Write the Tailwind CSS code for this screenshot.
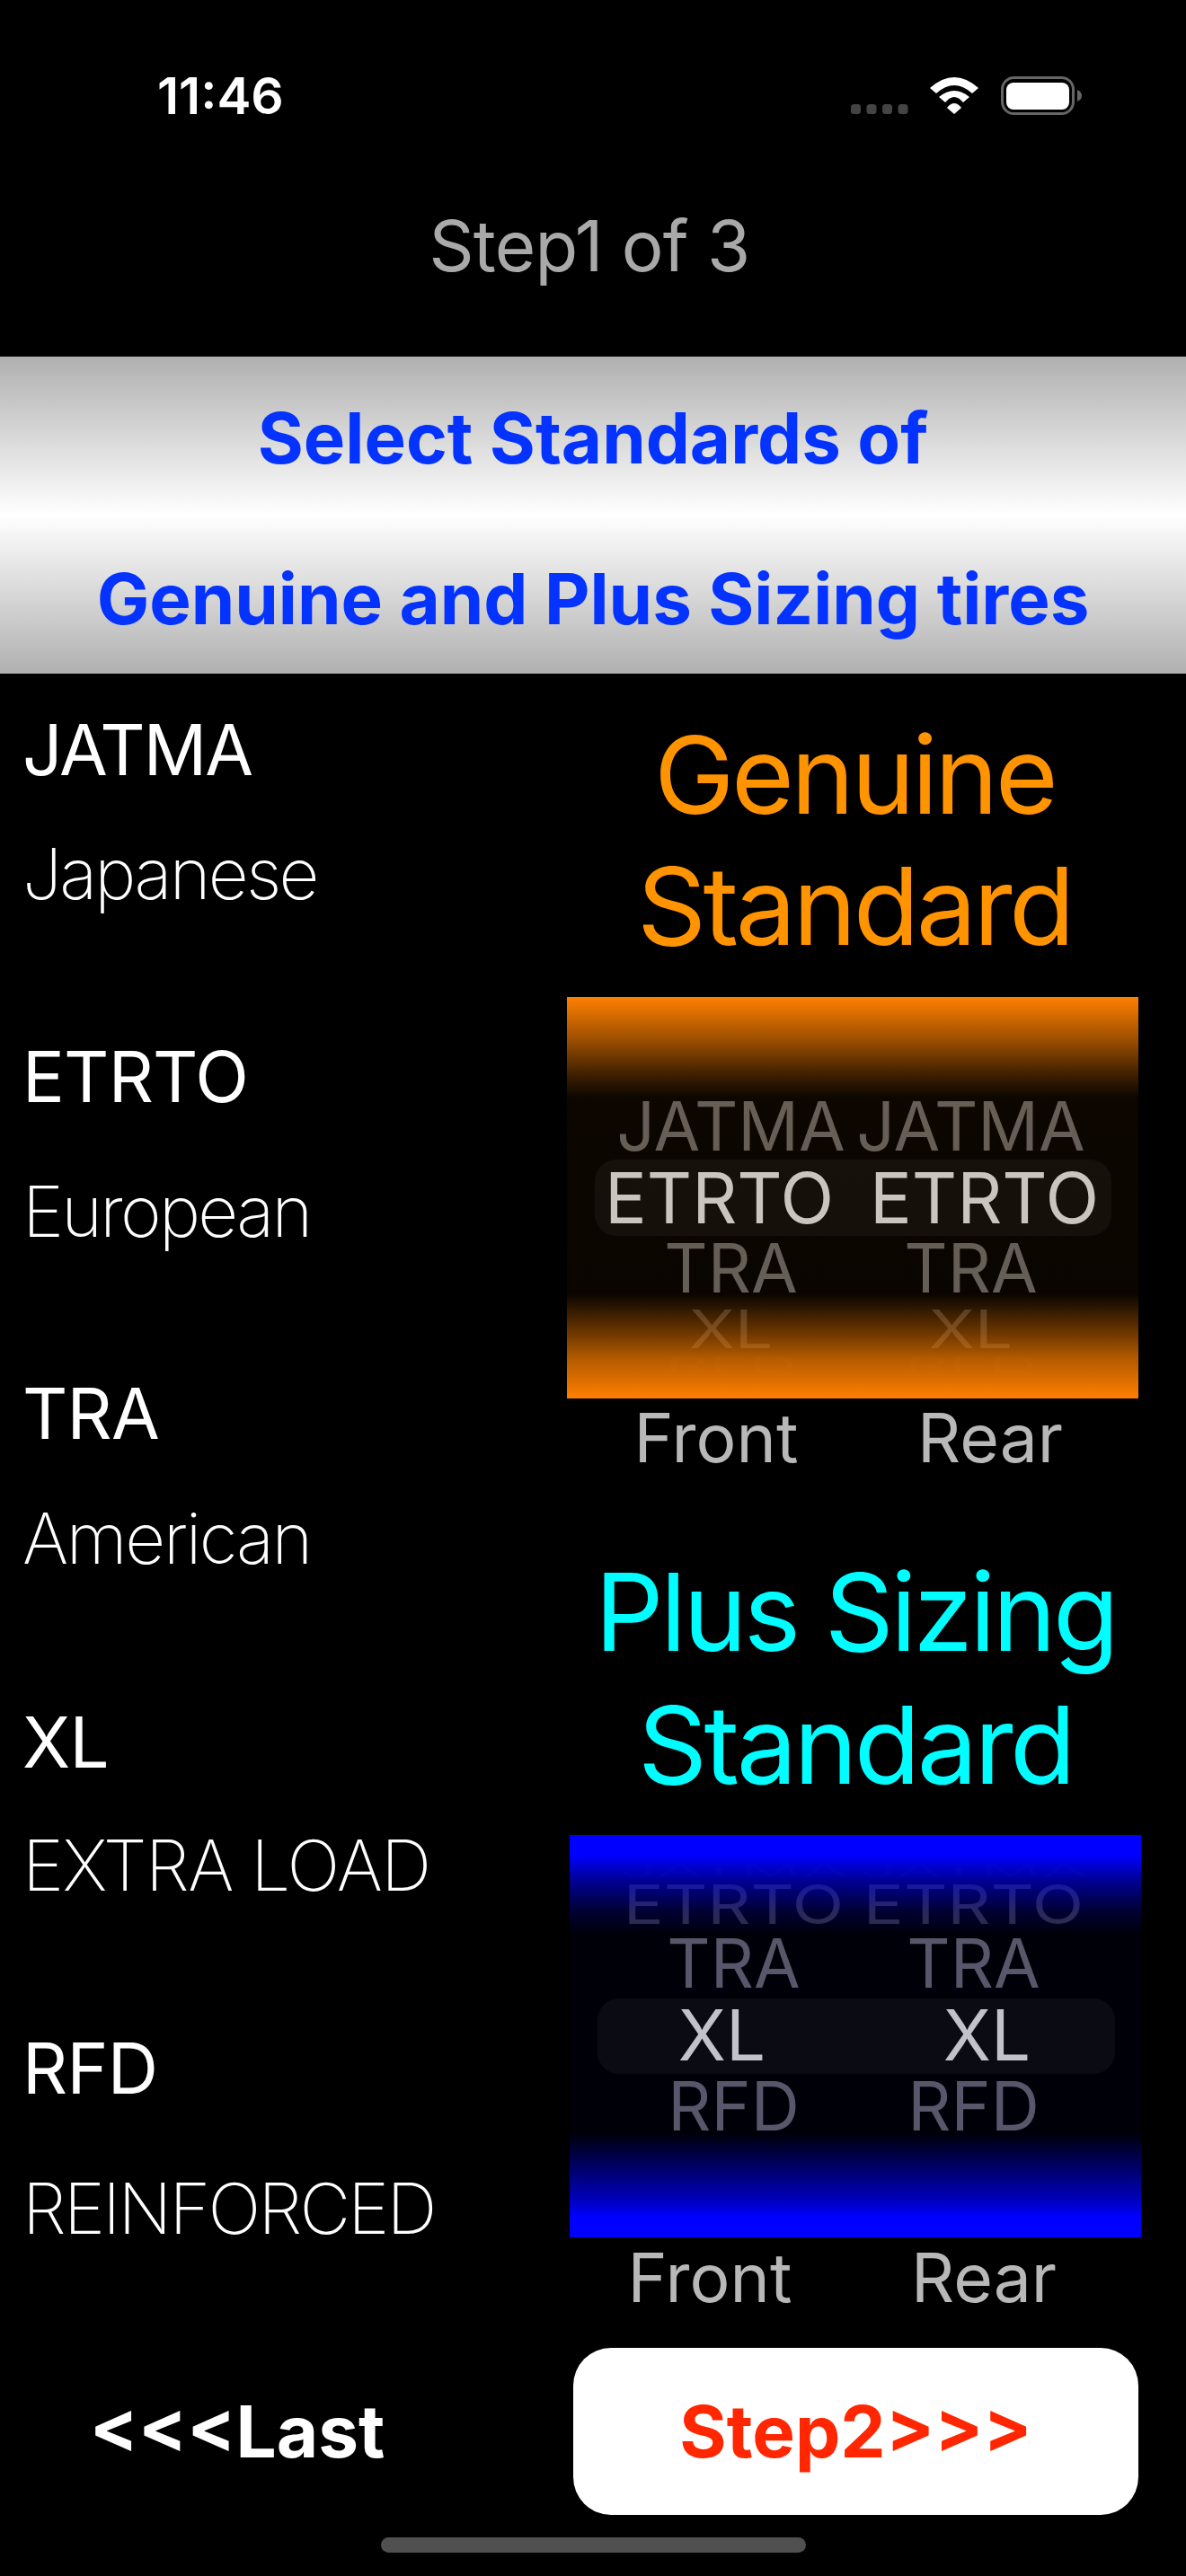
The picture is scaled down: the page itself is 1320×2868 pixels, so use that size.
<!DOCTYPE html>
<html lang="en">
<head>
    <meta charset="UTF-8">
    <meta name="viewport" content="width=device-width, initial-scale=1.0">
    <title>Step1 of 3</title>
    <script src="https://cdn.jsdelivr.net/npm/@tailwindcss/browser@4"></script>
</head>
<body class="bg-black font-['Inter',sans-serif]">
    <div class="w-[1320px] h-[2868px] bg-black overflow-hidden flex flex-col">
        <!-- Status bar -->
        <div class="h-[212px] shrink-0 flex items-center justify-between pl-[175px] pr-[116px]">
            <span class="text-[57px] font-semibold text-white leading-none">11:46</span>
            <svg width="257" height="43" viewBox="947 85 257 43">
                <rect x="947" y="116" width="11" height="11" rx="3.5" fill="#444"/>
                <rect x="964.5" y="116" width="11" height="11" rx="3.5" fill="#444"/>
                <rect x="982" y="116" width="11" height="11" rx="3.5" fill="#444"/>
                <rect x="999.5" y="116" width="11" height="11" rx="3.5" fill="#444"/>
                <path d="M1035 98 Q1062 74 1089 98 L1082 104 Q1062 86 1042 104 Z" fill="#fff"/>
                <path d="M1045 108 Q1062 94 1079 108 L1072 114 Q1062 102 1052 114 Z" fill="#fff"/>
                <path d="M1054 120 Q1062 110 1070 120 L1062 127 Z" fill="#fff"/>
                <rect x="1115.5" y="86.5" width="79" height="40" rx="13" fill="none" stroke="#666" stroke-width="3"/>
                <rect x="1120" y="92" width="70" height="30" rx="8" fill="#fff"/>
                <path d="M1199 100 Q1204 102 1204 106.500 Q1204 111 1199 113 Z" fill="#666"/>
            </svg>
        </div>

        <!-- Title -->
        <div class="h-[124px] mb-[61px] shrink-0 flex items-center justify-center pr-[8px]">
            <h1 class="text-[78px] font-normal tracking-[-0.01em] text-[#a9a9a9] leading-none">Step1 of 3</h1>
        </div>

        <!-- Banner -->
        <div class="h-[353px] shrink-0 bg-[linear-gradient(to_bottom,#b0b0b0,#ffffff_50%,#b0b0b0)] flex flex-col items-center pt-[41px] text-[78px] font-bold text-[#0433ff] leading-[100px]">
            <p>Select Standards of</p>
            <p class="mt-[79px]">Genuine and Plus Sizing tires</p>
        </div>

        <!-- Main -->
        <div class="h-[1864px] shrink-0 flex">
            <!-- Legend -->
            <div class="w-[631px] shrink-0 pl-[25px] pt-[35px] text-[78px] text-white leading-[100px]">
                <p class="tracking-[-0.025em]">JATMA</p>
                <p class="mt-[38px] font-extralight tracking-[-0.035em]">Japanese</p>
                <p class="mt-[126px] tracking-[-0.01em]">ETRTO</p>
                <p class="mt-[50px] font-extralight tracking-[-0.035em]">European</p>
                <p class="mt-[125px] tracking-[-0.01em]">TRA</p>
                <p class="mt-[39px] font-extralight tracking-[-0.03em]">American</p>
                <p class="mt-[127px] tracking-[-0.01em]">XL</p>
                <p class="mt-[37px] font-extralight tracking-[-0.02em]">EXTRA LOAD</p>
                <p class="mt-[126px] tracking-[-0.01em]">RFD</p>
                <p class="mt-[56px] font-extralight tracking-[-0.035em]">REINFORCED</p>
            </div>

            <!-- Pickers -->
            <div class="w-[640px] shrink-0">
                <div class="pt-[40px] pl-[4px] w-[636px] text-center text-[120px] tracking-[-0.03em] text-[#ff9300] leading-[146px]">
                    <p>Genuine</p>
                    <p>Standard</p>
                </div>

                <!-- Genuine picker -->
                <div class="relative w-[636px] h-[447px] mt-[28px] pt-[104px] bg-black overflow-hidden text-center text-[75px] text-[#5f5d5a]">
                    <div class="absolute left-[31px] top-[181px] w-[575px] h-[85px] rounded-[24px] bg-white/[0.045]"></div>
                    <div class="relative h-[80px] leading-[80px] pl-[49px] pr-[53px] grid grid-cols-2"><span>JATMA</span><span>JATMA</span></div>
                    <div class="relative h-[80px] leading-[80px] pl-[22px] pr-[24px] grid grid-cols-2 text-[78px] text-[#c8c8c8]"><span>ETRTO</span><span>ETRTO</span></div>
                    <div class="relative h-[76px] leading-[76px] pl-[49px] pr-[53px] grid grid-cols-2"><span>TRA</span><span>TRA</span></div>
                    <div class="relative h-[60px] leading-[60px] pl-[49px] pr-[53px] grid grid-cols-2 scale-y-[0.78] text-[#5f5d5a]/50"><span>XL</span><span>XL</span></div>
                    <div class="relative h-[20px] leading-[20px] pl-[49px] pr-[53px] grid grid-cols-2 scale-y-[0.3] text-[#5f5d5a]/10"><span>RFD</span><span>RFD</span></div>
                    <div class="absolute inset-0 bg-[linear-gradient(to_bottom,#ff8000,rgba(255,128,0,0.6)_11%,rgba(255,128,0,0.22)_20%,rgba(255,128,0,0.05)_25%,rgba(255,128,0,0.04)_74%,rgba(255,128,0,0.2)_78%,rgba(255,128,0,0.4)_83%,rgba(255,128,0,0.7)_90%,#ff8000)]"></div>
                </div>
                <div class="w-[636px] h-[88px] flex text-[75px] text-[#b8b8b8] leading-[88px]">
                    <span class="w-[332px] text-center">Front</span>
                    <span class="w-[278px] text-center">Rear</span>
                </div>

                <div class="mt-[76px] pl-[6px] w-[636px] text-center text-[120px] tracking-[-0.03em] text-[#00fdff] leading-[148px]">
                    <p>Plus Sizing</p>
                    <p>Standard</p>
                </div>

                <!-- Plus sizing picker -->
                <div class="relative w-[636px] h-[448px] ml-[3px] mt-[26px] pt-[31px] bg-black overflow-hidden text-center text-[75px] text-[#5a5a66]">
                    <div class="absolute left-[31px] top-[182px] w-[576px] h-[84px] rounded-[24px] bg-white/[0.045]"></div>
                    <div class="relative h-[16px] leading-[16px] pl-[49px] pr-[53px] grid grid-cols-2 scale-y-[0.25] text-[#5a5a66]/15"><span>JATMA</span><span>JATMA</span></div>
                    <div class="relative h-[60px] leading-[60px] pl-[49px] pr-[53px] grid grid-cols-2 scale-y-[0.8] text-[#5a5a66]/55"><span>ETRTO</span><span>ETRTO</span></div>
                    <div class="relative h-[72px] leading-[72px] pl-[49px] pr-[53px] grid grid-cols-2"><span>TRA</span><span>TRA</span></div>
                    <div class="relative h-[88px] leading-[88px] pl-[22px] pr-[24px] grid grid-cols-2 text-[78px] text-[#c8c8c8]"><span>XL</span><span>XL</span></div>
                    <div class="relative h-[70px] leading-[70px] pl-[49px] pr-[53px] grid grid-cols-2"><span>RFD</span><span>RFD</span></div>
                    <div class="absolute inset-0 bg-[linear-gradient(to_bottom,#0000ff,#0000ff_5%,rgba(0,0,255,0.6)_11%,rgba(0,0,255,0.2)_19%,rgba(0,0,255,0.03)_25%,rgba(0,0,255,0.03)_74%,rgba(0,0,255,0.38)_82%,rgba(0,0,255,0.7)_90%,#0000ff_95%)]"></div>
                </div>
                <div class="w-[636px] h-[90px] flex text-[75px] text-[#b8b8b8] leading-[90px]">
                    <span class="w-[318px] text-center">Front</span>
                    <span class="w-[292px] text-center">Rear</span>
                </div>
            </div>
        </div>

        <!-- Footer buttons -->
        <div class="h-[186px] shrink-0 flex items-center text-[80px] font-bold">
            <button class="w-[528px] text-center text-white">&lt;&lt;&lt;Last</button>
            <button class="ml-[110px] w-[629px] h-[186px] rounded-[42px] bg-white text-[#ff2600]">Step2&gt;&gt;&gt;</button>
        </div>

        <!-- Home indicator -->
        <div class="h-[68px] pt-[25px] flex justify-center">
            <div class="w-[473px] h-[17px] rounded-full bg-[#505050]"></div>
        </div>
    </div>
</body>
</html>
